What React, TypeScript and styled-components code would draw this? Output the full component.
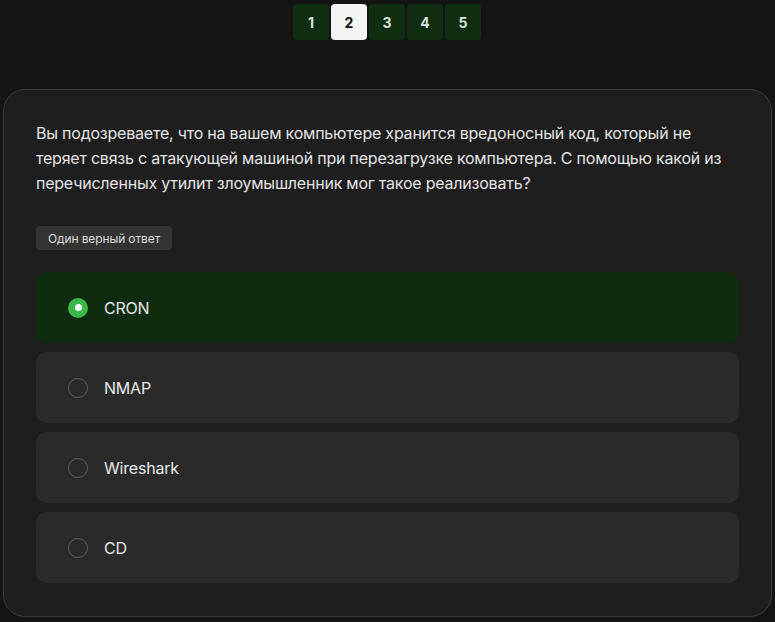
import React, { useState } from "react";
import styled, { createGlobalStyle } from "styled-components";

const Global = createGlobalStyle`
  html, body { margin: 0; padding: 0; background: #141414; }
  body { font-family: Inter, "Noto Sans", Roboto, sans-serif; color: #e6e6e6; }
  * { box-sizing: border-box; }
`;

const Page = styled.div`
  width: 775px;
  height: 622px;
  padding: 4px 3px 0;
  display: flex;
  flex-direction: column;
  align-items: center;
  overflow: hidden;
`;

const Pager = styled.div`
  display: flex;
  gap: 2px;
  margin-left: -1px;
`;

const PageButton = styled.button<{ $active?: boolean }>`
  width: 36px;
  height: 36px;
  border: none;
  border-radius: 4px;
  background: ${(p) => (p.$active ? "#f4f4f4" : "#0f2d10")};
  color: ${(p) => (p.$active ? "#111" : "#d8e2d8")};
  font-family: Inter, Roboto, sans-serif;
  font-weight: 700;
  font-size: 14px;
  display: flex;
  align-items: center;
  justify-content: center;
  padding: 0;
`;

const Card = styled.section`
  margin-top: 49px;
  width: 769px;
  height: 528px;
  background: #1e1e1e;
  border: 1px solid #3c3c3c;
  border-radius: 22px;
  padding: 31px 32px 0;
  display: flex;
  flex-direction: column;
  align-items: flex-start;
`;

const Question = styled.p`
  margin: 0;
  font-size: 16px;
  line-height: 25px;
  letter-spacing: -0.22px;
  color: #e4e4e4;
  width: 100%;
`;

const Badge = styled.span`
  margin-top: 30px;
  height: 24px;
  padding: 0 12px;
  display: inline-flex;
  align-items: center;
  background: #333333;
  border-radius: 4px;
  font-size: 12px;
  letter-spacing: -0.12px;
  color: #dcdcdc;
`;

const Options = styled.div`
  margin-top: 22px;
  width: 100%;
  display: flex;
  flex-direction: column;
  gap: 9px;
`;

const Option = styled.label<{ $selected?: boolean }>`
  height: 71px;
  border-radius: 10px;
  background: ${(p) => (p.$selected ? "#0f2b10" : "#2a2a2a")};
  display: flex;
  align-items: center;
  padding-left: 32px;
  gap: 16px;
  font-size: 16px;
  letter-spacing: -0.2px;
  color: #e8e8e8;
  cursor: pointer;
`;

const Radio = styled.span<{ $checked?: boolean }>`
  width: 20px;
  height: 20px;
  border-radius: 50%;
  flex-shrink: 0;
  border: ${(p) => (p.$checked ? "none" : "1.5px solid #5a5a5a")};
  background: ${(p) => (p.$checked ? "#3cb84a" : "transparent")};
  display: flex;
  align-items: center;
  justify-content: center;
  &::after {
    content: "";
    display: ${(p) => (p.$checked ? "block" : "none")};
    width: 7px;
    height: 7px;
    border-radius: 50%;
    background: #ffffff;
  }
`;

const options = ["CRON", "NMAP", "Wireshark", "CD"];

export default function App() {
  const [sel, setSel] = useState(0);
  return (
    <>
      <Global />
      <Page>
        <Pager>
          {[1, 2, 3, 4, 5].map((n) => (
            <PageButton key={n} $active={n === 2}>
              {n}
            </PageButton>
          ))}
        </Pager>
        <Card>
          <Question>
            Вы подозреваете, что на вашем компьютере хранится вредоносный код, который не
            теряет связь с атакующей машиной при перезагрузке компьютера. С помощью какой из
            перечисленных утилит злоумышленник мог такое реализовать?
          </Question>
          <Badge>Один верный ответ</Badge>
          <Options>
            {options.map((o, i) => (
              <Option key={o} $selected={sel === i} onClick={() => setSel(i)}>
                <Radio $checked={sel === i} />
                {o}
              </Option>
            ))}
          </Options>
        </Card>
      </Page>
    </>
  );
}
